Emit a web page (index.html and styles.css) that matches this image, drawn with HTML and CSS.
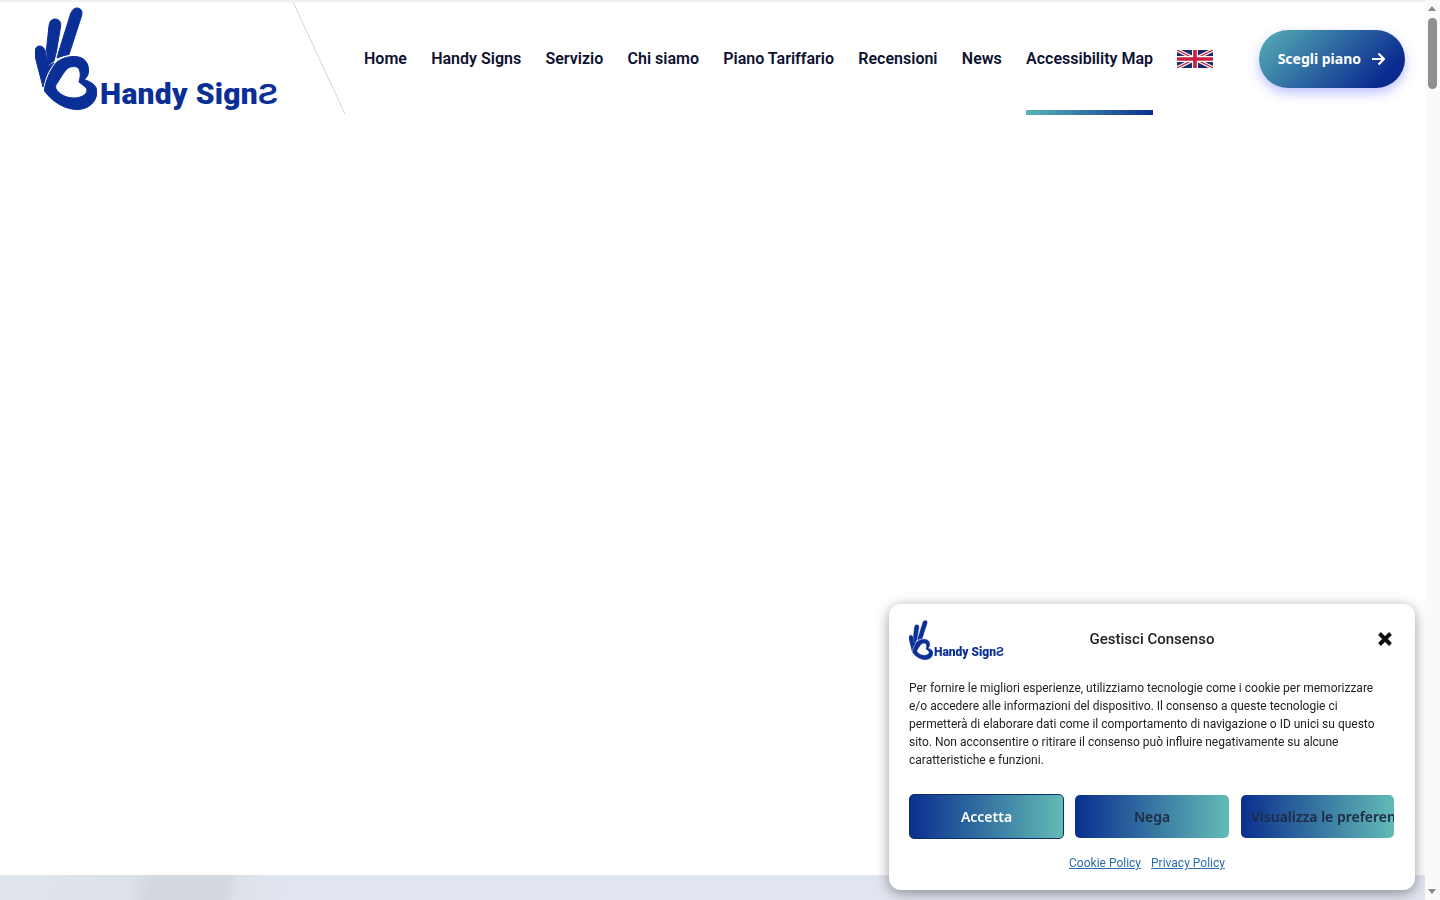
FILE: index.html
```html
<!DOCTYPE html>
<html lang="it">
<head>
  <meta charset="UTF-8" />
  <meta name="viewport" content="width=device-width, initial-scale=1.0" />
  <title>Handy Signs</title>
  <link rel="stylesheet" href="styles.css">
</head>
<body>
  <svg class="defs" width="0" height="0" aria-hidden="true">
    <symbol id="hand" viewBox="0 0 62 103">
      <path d="M4.500 39C1 39-1 43 0 49L8 80C10 70 14 62 19 56L13 59 11 48C10.500 42 8 39 4.500 39Z"/>
      <path d="M20 12C16 12 14.500 15 14 19L11.500 42 13 58 19 54C20 50 21 47 21.500 44L25.500 20C26.500 15 24 12 20 12Z"/>
      <path d="M42 1C39 1 37 3 35.500 7L24 44 22 51C26 49.500 30 48 34 47.500L46.500 9C48 4 46 1 42 1Z"/>
      <path fill-rule="evenodd" d="M36.500 49.500C44 49 51 51 53 59 54.500 65 53 70 49 72.500 57 75 62.500 79 62 86 61 95 54 102 43 102.500 32 103 18 96 9.500 84 9 80 14 63 22 55 26 52 31 50 36.500 49.500ZM34 60.500C38 59 43 59 44.500 63 46 67 45 71 44 75 47 78 52 80 52 83 52 88 45 91 39 91 31 91 24 87 21 82 20 79 21 77 23 75 26 70 30 63 34 60.500Z"/>
    </symbol>
  </svg>

  <header class="site-header">
    <a class="logo" href="#">
      <svg class="logo-hand"><use href="#hand"></use></svg>
      <span class="logo-text">Handy SignƧ</span>
    </a>
    <svg class="header-line" width="54" height="115" viewBox="0 0 54 115"><path d="M1 2 53 114" stroke="#d4d6da" fill="none"/></svg>
    <nav class="main-nav">
      <a href="#">Home</a>
      <a href="#">Handy Signs</a>
      <a href="#">Servizio</a>
      <a href="#">Chi siamo</a>
      <a href="#">Piano Tariffario</a>
      <a href="#">Recensioni</a>
      <a href="#">News</a>
      <a href="#" class="active">Accessibility Map</a>
      <a href="#" class="flag-link">
        <svg width="36" height="18" viewBox="0 0 60 30">
          <rect width="60" height="30" fill="#1f2a68"/>
          <path d="M0 0 60 30M60 0 0 30" stroke="#fff" stroke-width="6"/>
          <path d="M0 0 60 30M60 0 0 30" stroke="#c8203c" stroke-width="2"/>
          <path d="M30 0V30M0 15H60" stroke="#fff" stroke-width="10"/>
          <path d="M30 0V30M0 15H60" stroke="#c8203c" stroke-width="6"/>
        </svg>
      </a>
    </nav>
    <a class="cta" href="#">
      Scegli piano
      <svg width="14" height="14" viewBox="0 0 14 14"><path d="M1 7H12.500M7.500 1.500 13 7l-5.500 5.500" stroke="#fff" stroke-width="2.200" fill="none"/></svg>
    </a>
  </header>

  <main>
    <section class="hero-blank"></section>
    <section class="hero-strip">
      <div class="hero-shape"></div>
    </section>
  </main>

  <div class="cookie-box">
    <div class="cookie-head">
      <a class="logo logo-small" href="#">
        <svg class="logo-hand"><use href="#hand"></use></svg>
        <span class="logo-text">Handy SignƧ</span>
      </a>
      <div class="cookie-title">Gestisci Consenso</div>
      <button class="cookie-close" aria-label="Chiudi">
        <svg width="14" height="14" viewBox="0 0 14 14"><path d="M1.500 1.500 12.500 12.500M12.500 1.500 1.500 12.500" stroke="#111" stroke-width="4"/></svg>
      </button>
    </div>
    <p class="cookie-text">Per fornire le migliori esperienze, utilizziamo tecnologie come i cookie per memorizzare e/o accedere alle informazioni del dispositivo. Il consenso a queste tecnologie ci permetterà di elaborare dati come il comportamento di navigazione o ID unici su questo sito. Non acconsentire o ritirare il consenso può influire negativamente su alcune caratteristiche e funzioni.</p>
    <div class="cookie-buttons">
      <button class="cookie-btn accept">Accetta</button>
      <button class="cookie-btn nega">Nega</button>
      <button class="cookie-btn prefs">Visualizza le preferenze</button>
    </div>
    <div class="cookie-links">
      <a href="#">Cookie Policy</a>
      <a href="#">Privacy Policy</a>
    </div>
  </div>

  <div class="scrollbar" aria-hidden="true">
    <span class="arrow-up"></span>
    <span class="thumb"></span>
    <span class="arrow-down"></span>
  </div>
</body>
</html>
```

FILE: styles.css
```css
body {
  margin: 0;
  padding-right: 15px;
  font-family: 'Roboto', sans-serif;
  background: #fff;
  color: #0c1130;
}
a {
  text-decoration: none;
  color: inherit;
}
.defs {
  position: absolute;
}
.site-header {
  position: relative;
  display: flex;
  align-items: center;
  height: 113px;
  border-top: 2px solid #f1f2f3;
  background: #fff;
}
.logo {
  display: flex;
  align-items: flex-end;
  width: 242px;
  margin-left: 35px;
  color: #0a2f96;
}
.logo-hand {
  display: block;
  width: 62px;
  height: 103px;
  fill: #0a2f96;
  stroke: #0a2f96;
  stroke-width: 1;
  flex: none;
}
.logo-text {
  margin-left: 3px;
  font-family: 'Roboto', sans-serif;
  font-weight: 900;
  font-size: 30px;
  line-height: 30px;
  letter-spacing: 0.3px;
  white-space: nowrap;
  position: relative;
  top: -1px;
}
.header-line {
  position: absolute;
  left: 292px;
  top: -2px;
}
.main-nav {
  display: flex;
  align-items: center;
  gap: 24.3px;
  height: 113px;
  margin-left: 87px;
}
.main-nav a {
  position: relative;
  display: flex;
  align-items: center;
  height: 113px;
  font-size: 16px;
  font-weight: 600;
  white-space: nowrap;
}
.main-nav a.active::after {
  content: "";
  position: absolute;
  left: 0;
  right: 0;
  bottom: 0;
  height: 5px;
  background: linear-gradient(90deg, #58b4b6, #0a2f8f);
}
.flag-link svg {
  display: block;
}
.cta {
  display: flex;
  align-items: center;
  justify-content: center;
  gap: 10px;
  box-sizing: border-box;
  width: 146px;
  height: 58px;
  margin-left: 46px;
  padding-right: 2px;
  border-radius: 29px;
  background: linear-gradient(135deg, #56b0b6, #0a2a8f 85%);
  box-shadow: 0 5px 12px rgba(70, 80, 255, 0.35);
  color: #fff;
  font-family: 'Noto Sans', sans-serif;
  font-weight: 700;
  font-size: 14px;
}
.hero-blank {
  height: 760px;
}
.hero-strip {
  position: relative;
  height: 700px;
  background: #e1e5ef;
  overflow: hidden;
}
.hero-shape {
  position: absolute;
  left: 0;
  top: 0;
  width: 285px;
  height: 700px;
  background: linear-gradient(100deg, #e0e4eb 0, #dde1e9 130px, #d3d7e0 150px, #d3d7e0 225px, #dde1ea 235px, #e1e5ef 285px);
}
.cookie-box {
  position: fixed;
  right: 25px;
  bottom: 10px;
  width: 526px;
  height: 286px;
  box-sizing: border-box;
  padding: 15px 20px 0;
  border-radius: 12px;
  background: #fff;
  box-shadow: 0 3px 14px rgba(0, 0, 0, 0.4);
  color: #222;
}
.cookie-head {
  display: grid;
  grid-template-columns: 95px 1fr 95px;
  align-items: center;
  height: 41px;
}
.logo-small {
  width: 95px;
  margin: 0;
}
.logo-small .logo-hand {
  width: 24px;
  height: 40px;
}
.logo-small .logo-text {
  margin-left: 1px;
  font-size: 12px;
  line-height: 12px;
  letter-spacing: 0;
  top: -2px;
}
.cookie-title {
  text-align: center;
  font-size: 15px;
  font-weight: 500;
  color: #222;
  padding-bottom: 2px;
}
.cookie-close {
  justify-self: end;
  padding: 0;
  margin-right: 3px;
  margin-bottom: 2px;
  border: none;
  background: none;
  height: 14px;
}
.cookie-text {
  width: 480px;
  margin: 19px 0 0;
  font-size: 12px;
  line-height: 18px;
}
.cookie-buttons {
  display: flex;
  gap: 11px;
  align-items: center;
  margin-top: 25px;
}
.cookie-btn {
  width: 154px;
  height: 43px;
  padding: 0 10px;
  overflow: hidden;
  border: none;
  border-radius: 5px;
  background: linear-gradient(90deg, #0a2f8f, #62bbb5);
  color: #1f2a44;
  font-family: 'Noto Sans', sans-serif;
  font-weight: 600;
  font-size: 14px;
  white-space: nowrap;
}
.cookie-btn.accept {
  width: 155px;
  height: 45px;
  border: 1px solid #0a2f6f;
  color: #fff;
}
.cookie-btn.prefs {
  width: 153px;
  margin-left: 1px;
  text-align: left;
}
.cookie-links {
  display: flex;
  justify-content: center;
  gap: 10px;
  margin-top: 17px;
  padding-right: 10px;
  font-size: 12px;
}
.cookie-links a {
  color: #2b6cb0;
  text-decoration: underline;
}
.scrollbar {
  position: fixed;
  top: 0;
  right: 0;
  bottom: 0;
  width: 15px;
  background: #fafafa;
}
.arrow-up,
.arrow-down {
  position: absolute;
  left: 3px;
  border-left: 4.5px solid transparent;
  border-right: 4.5px solid transparent;
}
.arrow-up {
  top: 6px;
  border-bottom: 5px solid #8a8a8a;
}
.arrow-down {
  bottom: 6px;
  border-top: 5px solid #8a8a8a;
}
.thumb {
  position: absolute;
  top: 18px;
  left: 3px;
  width: 9px;
  height: 71px;
  border-radius: 4.5px;
  background: #8f8f8f;
}
```
